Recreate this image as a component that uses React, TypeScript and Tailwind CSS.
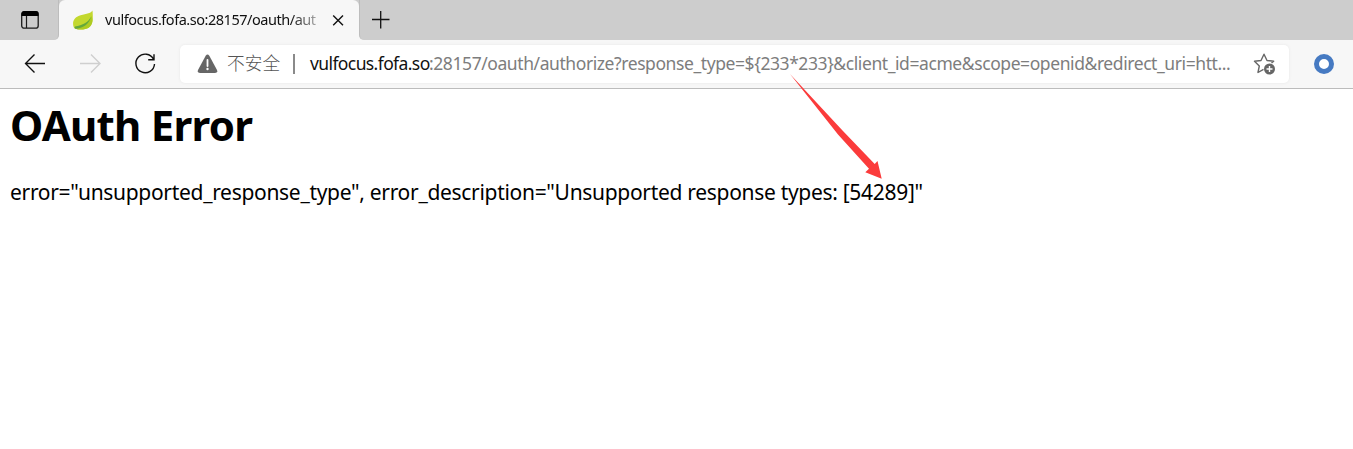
function Leaf() {
  return (
    <svg className="ml-[14px] h-5 w-5 shrink-0" viewBox="0 0 20 20">
      <path d="M19.500 .500C17 4.500 11 3.500 5.500 6C0 8.500-.500 13 .500 16.500C1 18 1.500 18.500 3 19L6 19.500C13 20 18.500 18 19.500 11C20 7 19.800 4 19.500 .500Z" fill="#c3d82e" />
      <path d="M18.500 6C16 12 10 14.500 3 17C3 19 4 19.500 6 19.500C13 20 18.500 18 19.500 11C19.700 9 19 7 18.500 6Z" fill="#aecb22" />
      <path d="M18 6.500C15.500 12.500 10 15 2 16.500C1 18 2 19 3.500 18.800C10 17.500 16.500 14.500 18 6.500Z" fill="#64a83c" />
    </svg>
  );
}

function TabBar() {
  return (
    <div className="flex h-10 bg-[#f7f7f7]">
      <div className="flex w-[59px] shrink-0 items-center rounded-br-[5px] border-r border-[#bdbdbd] bg-[#cdcdcd] pl-5">
        <svg className="h-5 w-5" viewBox="0 0 20 20" fill="none">
          <rect x="1.700" y="1.700" width="16.500" height="16.500" rx="2.500" stroke="#1b1b1b" strokeWidth="1.300" />
          <path d="M1.500 6V4a3 3 0 0 1 3-3h11a3 3 0 0 1 3 3v2Z" fill="#000" />
          <path d="M6.500 6v12" stroke="#1b1b1b" strokeWidth="1.200" />
        </svg>
      </div>
      <div className="w-[300px] shrink-0 bg-[#cdcdcd]">
        <div className="flex h-10 items-center rounded-t-[6px] bg-[#f7f7f7]">
          <Leaf />
          <div className="ml-3 w-[218px] whitespace-nowrap text-[14.5px] tracking-[-0.47px] text-[#111] [mask-image:linear-gradient(to_right,black_185px,transparent_225px)]">
            vulfocus.fofa.so:28157/oauth/aut
          </div>
          <svg className="ml-[7px] h-4 w-4 shrink-0" viewBox="0 0 16 16" fill="none" stroke="#111" strokeWidth="1.400">
            <path d="M3.200 3.500 13 13.300M13 3.500 3.200 13.300" />
          </svg>
        </div>
      </div>
      <div className="flex flex-1 items-center rounded-bl-[5px] border-l border-[#bdbdbd] bg-[#cdcdcd] pl-3">
        <svg className="h-[18px] w-[18px]" viewBox="0 0 18 18" fill="none" stroke="#111" strokeWidth="1.300">
          <path d="M0 8.500H17.500M8.700 0V17.500" />
        </svg>
      </div>
    </div>
  );
}

function AddressBar() {
  return (
    <div className="flex h-[49px] items-center border-b border-[#bcbcbc] bg-[#f7f7f7]">
      <svg className="ml-6 h-6 w-6 shrink-0" viewBox="0 0 24 24" fill="none" stroke="#111" strokeWidth="1.350">
        <path d="M21 11.500H1.500M10.500 2.500 1.500 11.500l9 9" />
      </svg>
      <svg className="ml-[31px] h-6 w-6 shrink-0" viewBox="0 0 24 24" fill="none" stroke="#cfcfcf" strokeWidth="1.350">
        <path d="M1 11.500h20M12 2.500l9 9-9 9" />
      </svg>
      <svg className="ml-[31px] h-6 w-6 shrink-0" viewBox="0 0 24 24" fill="none" stroke="#111" strokeWidth="1.400">
        <path d="M19.500 7.200A9.300 9.300 0 1 0 20.500 12M20 2.200V7.700H14.200" />
      </svg>
      <div className="ml-[22px] flex h-[38px] w-[1109px] shrink-0 items-center rounded-[5px] bg-white shadow-[0_0_3px_#e6e6e6]">
        <svg className="ml-[17px] h-5 w-[22px] shrink-0" viewBox="0 0 22 20">
          <path d="M8.700 1.800Q10.500 -1 12.300 1.800L20 16Q21 19 18 19H3Q0 19 1 16Z" fill="#666" />
          <path d="M10.500 6v6" stroke="#fff" strokeWidth="1.800" strokeLinecap="round" />
          <circle cx="10.500" cy="15" r="1.200" fill="#fff" />
        </svg>
        <span className="ml-2 w-[54px] shrink-0 -translate-y-px whitespace-nowrap text-[17.7px] font-light text-[#555]">不安全</span>
        <span className="ml-[12px] h-5 w-[2px] shrink-0 bg-[#8a8a8a]" />
        <div className="ml-[15px] flex w-[943px] shrink-0 -translate-y-px whitespace-nowrap text-[17.5px]">
          <span className="w-[119px] shrink-0 tracking-[-0.6px] text-[#111]">vulfocus.fofa.so</span>
          <span className="tracking-[-0.42px] text-[#7d7d7d]">
            :28157/oauth/authorize?response_type=$&#123;233*233&#125;&amp;client_id=acme&amp;scope=openid&amp;redirect_uri=htt...
          </span>
        </div>
        <svg className="h-6 w-6 shrink-0" viewBox="0 0 24 24" fill="none">
          <path d="M10.500 17.300 5 20.500 6.300 14 1.500 9.300 8 8.500 11 2.200 14 8.500 20.700 9.200 18.500 11" stroke="#666" strokeWidth="1.400" strokeLinejoin="round" />
          <circle cx="16.500" cy="17" r="5.500" fill="#666" />
          <path d="M13.500 17h6M16.500 14v6" stroke="#fff" strokeWidth="1.400" />
        </svg>
      </div>
      <svg className="ml-[25px] h-5 w-5 shrink-0" viewBox="0 0 20 20">
        <circle cx="10" cy="10" r="7.500" fill="#fff" stroke="#467ac2" strokeWidth="5" />
      </svg>
    </div>
  );
}

export default function App() {
  return (
    <div className="relative h-[449px] w-[1353px] overflow-hidden bg-white font-['Noto_Sans','Noto_Sans_CJK_SC',sans-serif]">
      <TabBar />
      <AddressBar />
      <main className="px-[10px] pt-[6px] text-black">
        <h1 className="h-[60px] whitespace-nowrap text-[42px] font-bold leading-[60px] tracking-[-0.75px]">OAuth Error</h1>
        <p className="mt-[22px] whitespace-nowrap text-[21px] leading-[30px] tracking-[-0.305px]">
          error="unsupported_response_type", error_description="Unsupported response types: [54289]"
        </p>
      </main>
      <svg className="pointer-events-none absolute left-[785px] top-[70px] h-[115px] w-[105px]" viewBox="785 70 105 115">
        <path d="M790 74 842.500 130.500 874.700 164 877.500 161 881.700 178.700 865.300 172.300 869 168.700 838 134.500Z" fill="#fb3b3b" />
      </svg>
    </div>
  );
}
